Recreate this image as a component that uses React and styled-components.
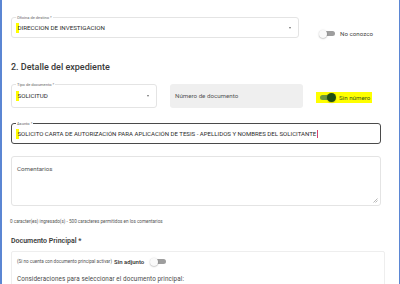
import React from "react";
import styled, { createGlobalStyle } from "styled-components";

const GlobalStyle = createGlobalStyle`
  html, body {
    margin: 0;
    padding: 0;
    background: #ffffff;
  }
  body {
    font-family: Roboto, "Liberation Sans", Arial, sans-serif;
    color: #333333;
  }
`;

const Page = styled.div`
  box-sizing: border-box;
  width: 400px;
  height: 284px;
  overflow: hidden;
  border-left: 2px solid #5b86d3;
  border-right: 1px solid #5b86d3;
  padding: 17px 0 0 9px;
  background: #ffffff;
`;

const Row = styled.div`
  display: flex;
  align-items: flex-start;
  margin-bottom: ${(p) => p.mb || 0}px;
`;

const Field = styled.div`
  position: relative;
  box-sizing: border-box;
  width: ${(p) => p.w}px;
  height: ${(p) => p.h || 21}px;
  border: 1px solid ${(p) => (p.focused ? "#4a4a4a" : "#e4e4e4")};
  border-radius: 3px;
  background: #ffffff;
  display: flex;
  align-items: ${(p) => (p.top ? "flex-start" : "center")};
  padding: ${(p) => (p.top ? "8px 5px 0" : "0 5px")};
`;

const FilledField = styled.div`
  box-sizing: border-box;
  width: ${(p) => p.w}px;
  height: 24px;
  margin-left: 13px;
  border-radius: 3px;
  background: #efefef;
  display: flex;
  align-items: center;
  padding: 0 5px;
  font-size: 6.2px;
  color: #555555;
`;

const FloatLabel = styled.span`
  position: absolute;
  top: -3px;
  left: 4px;
  padding: 0 1px;
  background: #ffffff;
  font-size: 4px;
  line-height: 5px;
  color: #666666;
`;

const Value = styled.span`
  flex: 1;
  font-size: ${(p) => p.size || 6.2}px;
  color: ${(p) => p.color || "#2b2b2b"};
  white-space: nowrap;
  display: flex;
  align-items: center;
`;

const Mark = styled.span`
  display: inline-block;
  width: 3px;
  height: 10px;
  background: #ffff00;
  margin: 0 -1.5px 0 -1px;
`;

const Caret = styled.span`
  width: 0;
  height: 0;
  border-left: 1.5px solid transparent;
  border-right: 1.5px solid transparent;
  border-top: 2px solid #707070;
  margin-right: 2px;
`;

const Cursor = styled.span`
  display: inline-block;
  width: 1px;
  height: 8px;
  background: #d9426b;
  margin-left: 0.5px;
`;

const ToggleWrap = styled.div`
  display: flex;
  align-items: center;
  gap: 3px;
  margin-top: ${(p) => p.mt || 0}px;
  margin-left: ${(p) => p.ml || 0}px;
  padding: ${(p) => (p.highlight ? "1px 2px" : "0")};
  background: ${(p) => (p.highlight ? "#ffff00" : "transparent")};
`;

const Track = styled.span`
  position: relative;
  display: inline-block;
  width: 14px;
  height: 5px;
  border-radius: 3px;
  background: ${(p) => (p.on ? "#6f9a3c" : "#9e9e9e")};
  margin: 2px 2px;
`;

const Thumb = styled.span`
  position: absolute;
  top: 50%;
  left: ${(p) => (p.on ? "7px" : "-2px")};
  width: ${(p) => (p.on ? 9 : 8)}px;
  height: ${(p) => (p.on ? 9 : 8)}px;
  margin-top: ${(p) => (p.on ? -4.5 : -4)}px;
  border-radius: 50%;
  background: ${(p) => (p.on ? "#1e4d12" : "#fafafa")};
  box-shadow: 0 0.5px 1.5px rgba(0, 0, 0, 0.35);
`;

const ToggleText = styled.span`
  font-size: 6.2px;
  color: ${(p) => (p.on ? "#3b5a1a" : "#444444")};
`;

const Heading = styled.h2`
  margin: 24px 0 11px;
  font-size: 9px;
  line-height: 11px;
  font-weight: 500;
  color: #3a3a3a;
`;

const Helper = styled.div`
  margin: 13px 0 0 -1px;
  font-size: 4.6px;
  line-height: 6px;
  color: #555555;
`;

const SubHeading = styled.div`
  margin: 12px 0 5px;
  font-size: 7px;
  line-height: 9px;
  font-weight: 600;
  color: #3a3a3a;
`;

const Panel = styled.div`
  box-sizing: border-box;
  width: 374px;
  height: 60px;
  border: 1px solid #eeeeee;
  border-radius: 2px;
  padding: 5px 5px;
`;

const PanelLine = styled.div`
  display: flex;
  align-items: center;
  gap: 2px;
  margin-bottom: ${(p) => p.mb || 0}px;
`;

const Tiny = styled.span`
  font-size: 4.6px;
  color: #555555;
`;

const Strong = styled.span`
  font-size: 6px;
  font-weight: 600;
  color: #3a3a3a;
`;

const Note = styled.div`
  font-size: 6.3px;
  color: #4a4a4a;
  letter-spacing: 0.1px;
`;

const Grip = styled.svg`
  position: absolute;
  right: 2px;
  bottom: 2px;
`;

const Toggle = ({ on, label, highlight, mt, ml }) => (
  <ToggleWrap highlight={highlight} mt={mt} ml={ml}>
    <Track on={on}>
      <Thumb on={on} />
    </Track>
    {label && <ToggleText on={on}>{label}</ToggleText>}
  </ToggleWrap>
);

export default function App() {
  return (
    <>
      <GlobalStyle />
      <Page>
        <Row>
          <Field w={288}>
            <FloatLabel>Oficina de destino *</FloatLabel>
            <Value>
              <Mark />
              DIRECCION DE INVESTIGACION
            </Value>
            <Caret />
          </Field>
          <Toggle label="No conozco" mt={12} ml={20} />
        </Row>

        <Heading>2. Detalle del expediente</Heading>

        <Row mb={15}>
          <Field w={146} h={24}>
            <FloatLabel>Tipo de documento *</FloatLabel>
            <Value>
              <Mark />
              SOLICITUD
            </Value>
            <Caret />
          </Field>
          <FilledField w={133}>Número de documento</FilledField>
          <Toggle label="Sin número" on highlight mt={8} ml={13} />
        </Row>

        <Row mb={12}>
          <Field w={370} focused>
            <FloatLabel>Asunto *</FloatLabel>
            <Value size={6.05}>
              <Mark />
              SOLICITO CARTA DE AUTORIZACIÓN PARA APLICACIÓN DE TESIS - APELLIDOS Y NOMBRES DEL SOLICITANTE
              <Cursor />
            </Value>
          </Field>
        </Row>

        <Field w={370} h={50} top>
          <Value color="#555555">Comentarios</Value>
          <Grip width="6" height="6" viewBox="0 0 6 6">
            <path d="M5.5 1.5 L1.5 5.5 M5.5 3.5 L3.5 5.5" stroke="#9a9a9a" strokeWidth="0.7" />
          </Grip>
        </Field>

        <Helper>
          0 caracter(es) ingresado(s) - 500 caracteres permitidos en los comentarios
        </Helper>

        <SubHeading>Documento Principal *</SubHeading>

        <Panel>
          <PanelLine mb={9}>
            <Tiny>(Si no cuenta con documento principal activar)</Tiny>
            <Strong>Sin adjunto</Strong>
            <Toggle ml={4} />
          </PanelLine>
          <Note>Consideraciones para seleccionar el documento principal:</Note>
        </Panel>
      </Page>
    </>
  );
}
